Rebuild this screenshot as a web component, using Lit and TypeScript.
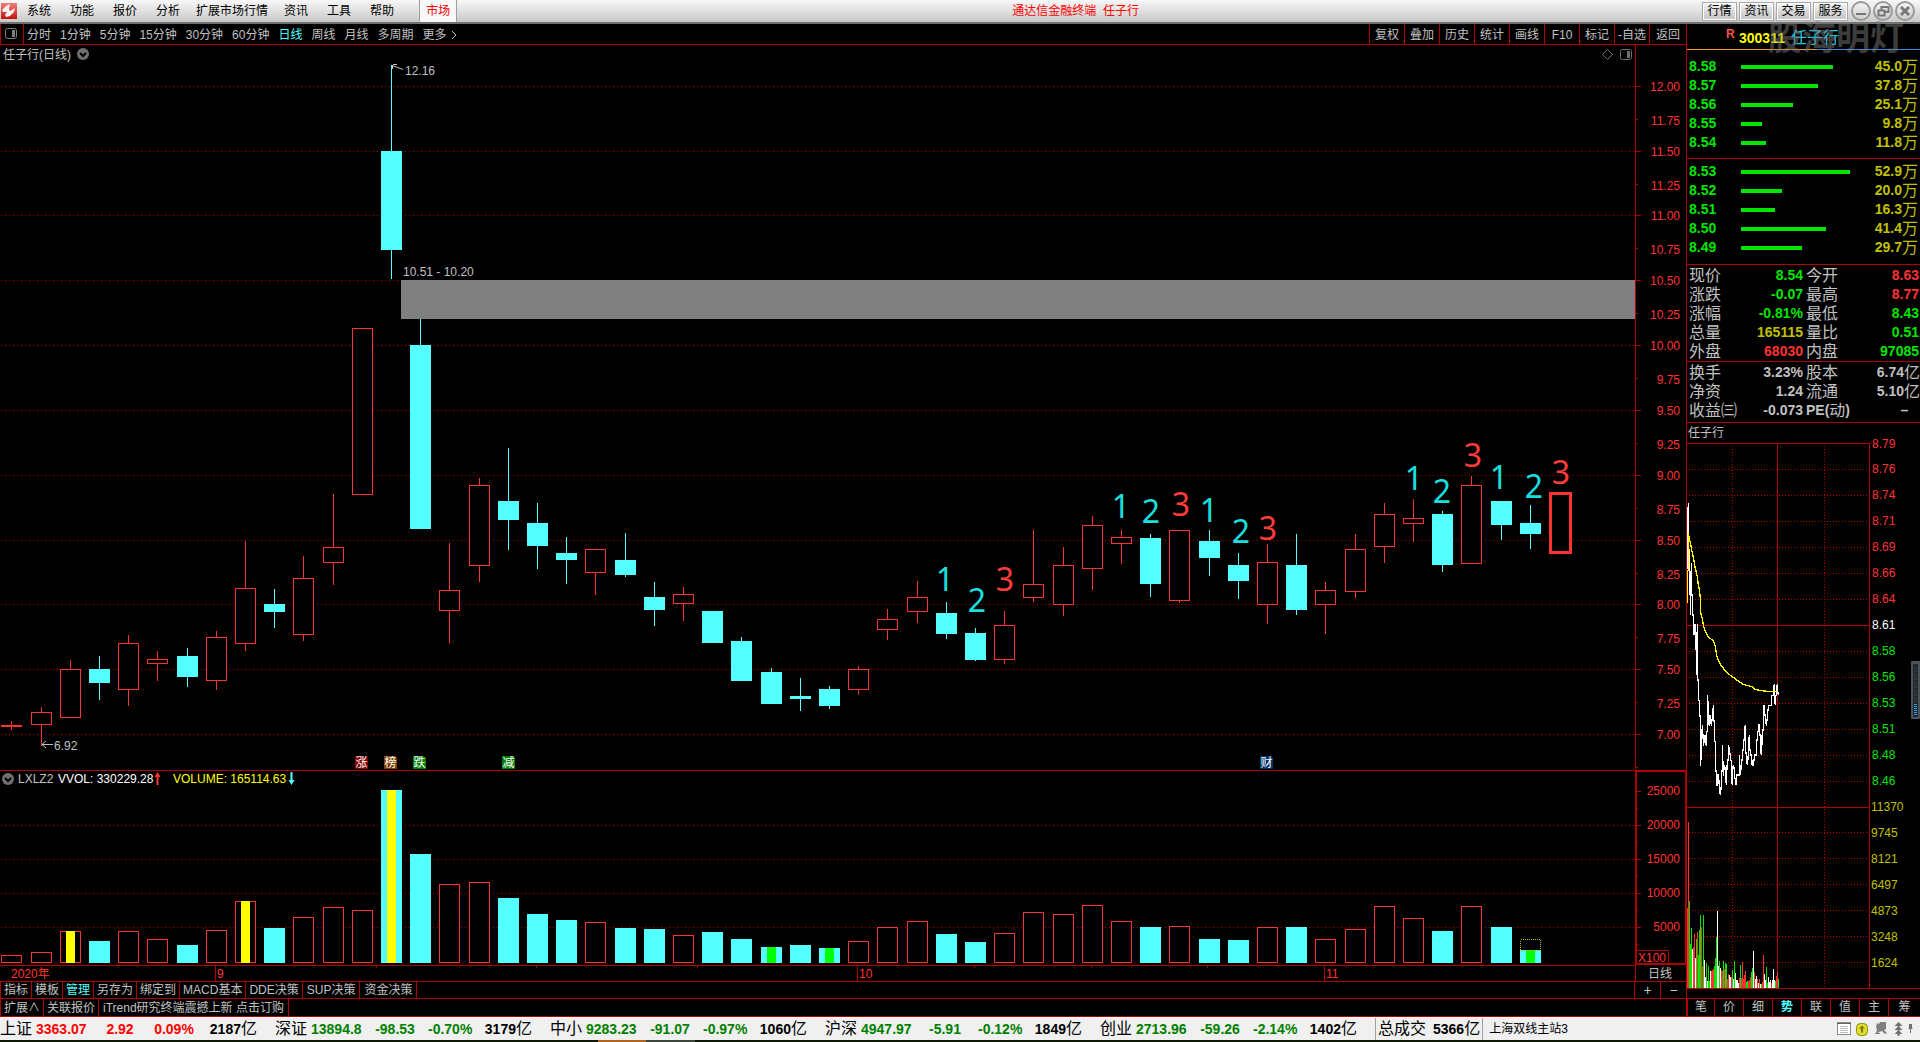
import { LitElement, html, svg, css } from "lit";
import { customElement, property, state } from "lit/decorators.js";
import { classMap } from "lit/directives/class-map.js";

type Kind = "u" | "d";
// kind, high, body top, body bottom, low, volume top, accent
type Candle = [Kind, number, number, number, number, number, string?];

const CANDLES: Candle[] = [
  ["u", 721, 725, 727, 730, 955],
  ["u", 707, 712, 725, 746, 952],
  ["u", 660, 669, 718, 718, 931, "y"],
  ["d", 656, 669, 683, 700, 941],
  ["u", 635, 643, 690, 706, 931],
  ["u", 651, 659, 664, 681, 939],
  ["d", 648, 656, 677, 687, 945],
  ["u", 631, 637, 681, 690, 930],
  ["u", 541, 588, 644, 651, 901, "y"],
  ["d", 589, 604, 612, 628, 928],
  ["u", 556, 578, 635, 641, 917],
  ["u", 494, 547, 563, 585, 907],
  ["u", 328, 328, 495, 495, 910],
  ["d", 65, 151, 250, 279, 790, "y"],
  ["d", 319, 345, 529, 529, 854],
  ["u", 543, 590, 611, 643, 884],
  ["u", 478, 485, 566, 582, 882],
  ["d", 448, 501, 520, 550, 898],
  ["d", 503, 523, 546, 569, 914],
  ["d", 537, 553, 560, 584, 920],
  ["u", 549, 549, 573, 595, 922],
  ["d", 533, 560, 575, 577, 928],
  ["d", 582, 597, 610, 626, 929],
  ["u", 587, 594, 604, 621, 935],
  ["d", 611, 611, 643, 643, 932],
  ["d", 637, 641, 681, 681, 939],
  ["d", 668, 672, 704, 704, 947, "g"],
  ["d", 678, 696, 699, 711, 945],
  ["d", 686, 689, 706, 709, 948, "g"],
  ["u", 666, 669, 690, 695, 941],
  ["u", 609, 619, 630, 640, 927],
  ["u", 581, 597, 612, 623, 921],
  ["d", 602, 613, 634, 639, 934],
  ["d", 628, 633, 660, 661, 942],
  ["u", 611, 625, 660, 664, 933],
  ["u", 530, 584, 598, 602, 912],
  ["u", 547, 565, 605, 616, 914],
  ["u", 516, 525, 569, 590, 905],
  ["u", 530, 537, 544, 564, 921],
  ["d", 534, 538, 584, 597, 927],
  ["u", 530, 530, 601, 603, 926],
  ["d", 530, 541, 558, 576, 939],
  ["d", 553, 565, 581, 599, 940],
  ["u", 544, 562, 605, 624, 927],
  ["d", 534, 565, 610, 615, 927],
  ["u", 582, 590, 605, 634, 939],
  ["u", 534, 549, 592, 598, 929],
  ["u", 503, 514, 547, 563, 906],
  ["u", 499, 518, 524, 542, 918],
  ["d", 511, 514, 565, 572, 931],
  ["u", 476, 485, 564, 564, 906],
  ["d", 501, 501, 525, 540, 927],
  ["d", 505, 523, 534, 549, 950, "g"],
];

const COUNTS: [string, number, number][] = [
  ["1", 945, 591], ["2", 977, 612], ["3", 1005, 591],
  ["1", 1121, 518], ["2", 1151, 523], ["3", 1181, 516],
  ["1", 1209, 522], ["2", 1241, 543], ["3", 1268, 540],
  ["1", 1414, 490], ["2", 1442, 503], ["3", 1473, 467],
  ["1", 1499, 489], ["2", 1534, 498], ["3", 1561, 484],
];

const PRICE_ROWS = [86, 151, 215, 280, 345, 410, 475, 540, 604, 669, 734];
const VOLUME_ROWS: [number, string][] = [
  [791, "25000"], [825, "20000"], [859, "15000"], [893, "10000"], [927, "5000"],
];
const MARKS: [string, number, string][] = [
  ["涨", 355, "#800000"], ["榜", 384, "#804000"], ["跌", 413, "#008000"],
  ["减", 502, "#008000"], ["财", 1260, "#003366"],
];

const PRICE_PATH =
  "202,388 202,265 205,190 205,330 208,330 208,465 211,448 211,525 214,370 214,465 217,465 217,525 220,525 220,585 223,552 223,585 226,552 226,628 229,628 229,704 232,552 232,720 235,720 235,782 238,782 238,828 241,828 241,978 244,945 247,855 247,885 250,885 250,918 253,900 253,886 256,886 256,903 259,918 259,885 262,870 262,766 265,796 265,840 268,858 268,826 271,826 274,858 274,840 277,840 280,796 280,843 283,843 283,905 286,905 286,993 289,993 289,1036 292,1036 292,1005 295,1005 298,1036 301,1066 304,1036 304,993 307,993 307,915 307,975 310,962 310,1008 313,975 316,990 319,1036 319,975 322,990 322,960 325,960 325,915 328,930 331,948 331,962 334,962 334,1005 337,1036 337,990 340,975 343,990 343,1005 349,1036 349,1005 358,1005 358,945 361,1005 361,975 364,990 364,960 367,960 367,930 370,930 370,900 373,900 373,870 376,855 376,930 379,945 379,960 382,975 385,945 385,930 388,885 388,930 391,930 391,945 394,945 394,975 397,960 397,975 400,975 400,960 403,960 403,945 409,945 409,900 412,900 412,885 415,870 415,855 418,855 418,885 421,885 421,915 424,945 424,885 427,915 427,870 430,870 430,796 433,796 433,825 436,825 439,858 439,840 442,840 442,810 445,810 445,796 454,796 454,766 460,766 460,750 463,732 463,766 466,796 466,766 469,766 469,750 472,732 472,750 475,765";
const AVERAGE_PATH =
  "202,488 202,400 205,388 205,277 208,300 211,305 214,325 220,352 226,385 232,410 235,435 238,450 241,475 241,515 247,535 250,555 256,575 265,590 280,603 286,620 291,650 300,672 310,685 320,698 337,710 350,720 370,733 395,740 405,748 420,751 440,754 475,754";
// Minute volume bars, one per step: colour letter and top
const MINUTE_BARS =
  "r384 r126 g363 g492 g444 w507 r500 r462 w534 g477 r456 g525 g450 g405 r441 r558 g405 w540 w591 g549 w603 g558 g603 w573 r573 r570 r567 g558 g534 g471 w393 w558 g543 w564 r570 r573 g543 r567 g549 g552 r597 r582 w585 w591 r591 g570 w597 g543 w579 w600 w600 w609 r594 g555 r594 r546 r597 r585 r573 g606 g603 r603 r600 r591 g576 g564 w513 r576 w597 w588 r597 w609 r597 w612 g612 r606 r525 w582 w600 g561 g609 w591 w606 w600 r609 w600 w567 w600 g603 r588 r576 g597".split(" ");

const centre = (i: number) => Math.round(11.4 + 29.2 * i);
const MINUTE_COLOURS: Record<string, string> = { r: "#ff3232", g: "#00e600", w: "#ffffff" };

const shared = css`
  * { box-sizing: border-box; }
  button {
    font: inherit; color: inherit; background: none; border: 0;
    margin: 0; padding: 0; white-space: nowrap; cursor: default;
  }
  svg { display: block; }
`;

@customElement("kline-chart")
class KlineChart extends LitElement {
  static styles = [shared, css`
    :host { display: block; }
    .chart { width: 100%; height: auto; font-family: "Liberation Sans", "Noto Sans CJK SC", sans-serif; font-size: 12px; }
    .crisp { shape-rendering: crispEdges; }
    .line { stroke: #b00000; fill: none; }
    .dots { stroke: #c00000; stroke-dasharray: 1 3; }
    .up { stroke: #ff3232; fill: #000; }
    .down { stroke: #54ffff; fill: #54ffff; }
    .thick { stroke: #ff3232; stroke-width: 3; fill: #000; }
    .axis { fill: #ff3232; text-anchor: end; }
    .red { fill: #ff3232; }
    .grey { fill: #c0c0c0; }
    .white { fill: #fff; }
    .yellow { fill: #ff0; }
    .count { font-family: "Noto Sans", sans-serif; font-size: 32px; text-anchor: middle; fill: #1adede; }
    .third { fill: #ff3c3c; }
    .mark { fill: #fff; text-anchor: middle; }
    .mid { text-anchor: middle; }
    .arrow { stroke: #c0c0c0; fill: none; }
    .dim { stroke: #707070; fill: none; }
    .disc { fill: #707070; }
    .tick { stroke: #000; stroke-width: 2; fill: none; }
  `];

  private toggle(x: number, y: number) {
    return svg`<circle class="disc" cx=${x} cy=${y} r="6"/><path class="tick" d="M${x - 3} ${y - 1}l3 3l3 -3"/>`;
  }

  private candle(c: Candle, i: number) {
    const [kind, high, top, bottom, low] = c;
    const x = centre(i);
    return svg`<g class=${kind === "u" ? "up" : "down"}>
      <path d="M${x + 0.5} ${high}V${low}"/>
      <rect x=${x - 9.5} y=${top + 0.5} width="20" height=${bottom - top - 1}/></g>`;
  }

  private volume(c: Candle, i: number) {
    const x = centre(i);
    const top = c[5];
    return svg`<g class=${c[0] === "u" ? "up" : "down"}>
      <rect x=${x - 9.5} y=${top + 0.5} width="20" height=${962 - top}/></g>
      ${c[6] ? svg`<rect x=${x - 4} y=${top} width="9" height=${963 - top} fill=${c[6] === "y" ? "#ff0" : "#0f0"}/>` : null}`;
  }

  render() {
    return html`<svg class="chart" viewBox="0 45 1686 936" role="img" aria-label="任子行 日线">
      <g class="crisp">
        ${PRICE_ROWS.map((y) => svg`<path class="dots" d="M1 ${y + 0.5}H1635"/><path class="line" d="M1635 ${y + 0.5}h6"/>`)}
        ${PRICE_ROWS.map((y) => svg`<path class="line" d="M1635 ${y + 33.5}h3"/>`)}
        ${VOLUME_ROWS.map(([y], i) => svg`${i ? svg`<path class="dots" d="M1 ${y + 0.5}H1635"/>` : null}
          <path class="line" d="M1635 ${y + 0.5}h6M1637 ${y + 17.5}h1"/>`)}
        <path class="line" d="M0 770.5H1686M1635.5 45V981M0 965.5H1635"/>
        <path class="line" stroke-width="2" d="M1636 771H1686V964H1636Z"/>
        <path class="line" d="M1637 950.5H1668.5V963"/>
        <path class="line" d="M215.5 965V981M857.5 965V981M1324.5 965V981M376.5 965v3M536.5 965v3M697.5 965v3M974.5 965v3M1091.5 965v3M1207.5 965v3"/>
        ${CANDLES.map((c, i) => this.candle(c, i))}
        <rect x="401" y="280" width="1234" height="39" fill="#808080"/>
        <rect class="thick" x="1550.5" y="493.5" width="20" height="59"/>
        ${CANDLES.map((c, i) => this.volume(c, i))}
        <rect x="1520.5" y="939.5" width="20" height="11" fill="none" stroke="#c0c000" stroke-dasharray="1 1"/>
      </g>

      <text class="grey" x="3" y="59">任子行(日线)</text>
      ${this.toggle(83, 54)}
      <path class="dim" d="M1607.5 49.5l5 5l-5 5l-5 -5z"/>
      <rect class="dim" x="1620.5" y="49.5" width="11" height="10" rx="2"/>
      <rect x="1627" y="51" width="3" height="7" fill="#707070"/>

      ${PRICE_ROWS.map((y, i) => svg`<text class="axis" x="1680" y=${y + 5}>${(12 - i * 0.5).toFixed(2)}</text>`)}
      ${PRICE_ROWS.slice(0, -1).map((y, i) => svg`<text class="axis" x="1680" y=${y + 39}>${(11.75 - i * 0.5).toFixed(2)}</text>`)}
      ${VOLUME_ROWS.map(([y, t]) => svg`<text class="axis" x="1680" y=${y + 4}>${t}</text>`)}
      <text class="red" x="1638" y="962">X100</text>
      <text class="grey mid" x="1660" y="978">日线</text>

      <path class="arrow" d="M403 69.5L392 65.5M397 64.5h-4M392.500 65v4"/>
      <text class="grey" x="405" y="75">12.16</text>
      <text class="grey" x="403" y="276">10.51 - 10.20</text>
      <path class="arrow" d="M53 744.5H42M46 741l-4 3.500l4 3.500"/>
      <text class="grey" x="54" y="750">6.92</text>

      ${COUNTS.map(([t, x, y]) => svg`<text class=${t === "3" ? "count third" : "count"} x=${x} y=${y}>${t}</text>`)}
      ${MARKS.map(([t, x, c]) => svg`<path d="M${x} 756h11l2 2v11h-13z" fill=${c}/><text class="mark" x=${x + 6.5} y="767">${t}</text>`)}

      ${this.toggle(8, 779)}
      <text class="grey" x="18" y="783">LXLZ2</text>
      <text class="white" x="58" y="783">VVOL: 330229.28</text>
      <path d="M157.500 772l-3 5h2v8h2v-8h2z" fill="#ff3232"/>
      <text class="yellow" x="173" y="783">VOLUME: 165114.63</text>
      <path d="M291.500 785l-3 -5h2v-8h2v8h2z" fill="#54ffff"/>

      <text class="red" x="11" y="978">2020年</text>
      <text class="red" x="217" y="978">9</text>
      <text class="red" x="859" y="978">10</text>
      <text class="red" x="1326" y="978">11</text>
    </svg>`;
  }
}

@customElement("minute-chart")
class MinuteChart extends LitElement {
  static styles = [shared, css`
    :host { display: block; }
    .chart { width: 100%; height: auto; overflow: visible; font-family: "Liberation Sans", sans-serif; font-size: 12px; }
    .crisp { shape-rendering: crispEdges; }
    .line { stroke: #b00000; fill: none; }
    .dots { stroke: #b00000; stroke-dasharray: 1 2; }
    .rise { fill: #ff3232; }
    .flat { fill: #fff; }
    .fall { fill: #00e600; }
    .vol { fill: #c0c000; }
    .price { stroke: #fff; stroke-width: 4; fill: none; }
    .average { stroke: #ff0; stroke-width: 4; fill: none; }
  `];

  render() {
    const prices = ["8.79", "8.76", "8.74", "8.71", "8.69", "8.66", "8.64", "8.61", "8.58", "8.56", "8.53", "8.51", "8.48", "8.46"];
    const volumes = ["11370", "9745", "8121", "6497", "4873", "3248", "1624"];
    return html`<svg class="chart" viewBox="1687 443 233 555" role="img" aria-label="任子行 分时">
      <g class="crisp">
        ${prices.map((_, i) => (i % 7 ? svg`<path class="dots" d="M1689 ${443.5 + 26 * i}H1869"/>` : null))}
        ${volumes.map((_, i) => (i ? svg`<path class="dots" d="M1689 ${806.5 + 26 * i}H1869"/>` : null))}
        <path class="dots" d="M1732.5 446V988M1824.5 446V988"/>
        <path class="line" d="M1687 443.5H1869.5V988M1687 625.5H1869M1687 807.5H1869M1777.5 443V988M1687 988.5H1920"/>
        <g transform="translate(1620 780) scale(0.33333)">
          ${MINUTE_BARS.map((b, i) => svg`<rect x=${201 + i * 3} y=${+b.slice(1)} width="3" height=${624 - +b.slice(1)} fill=${MINUTE_COLOURS[b[0]]}/>`)}
        </g>
        <g transform="translate(1620 440) scale(0.33333)">
          <polyline class="price" points=${PRICE_PATH}/>
          <polyline class="average" points=${AVERAGE_PATH}/>
        </g>
      </g>
      ${prices.map((p, i) => svg`<text class=${i < 7 ? "rise" : i === 7 ? "flat" : "fall"} x="1872" y=${(i ? 447 : 448) + 26 * i}>${p}</text>`)}
      ${volumes.map((p, i) => svg`<text class="vol" x="1871" y=${811 + 26 * i}>${p}</text>`)}
      <rect x="1911" y="661" width="9" height="58" rx="1" fill="#4a545e"/>
      <rect x="1913" y="664" width="5" height="53" fill="#20262c"/>
      <path d="M1915.500 667V703" stroke="#3c3c40" stroke-width="3" stroke-dasharray="1 1"/>
      <path d="M1915.500 704V716" stroke="#28a0dc" stroke-width="3" stroke-dasharray="1 1"/>
    </svg>`;
  }
}

@customElement("quote-panel")
class QuotePanel extends LitElement {
  @state() private tab = "势";

  static styles = [shared, css`
    :host { display: flex; flex-direction: column; color: #c0c0c0; }
    .head {
      height: 26px; display: flex; align-items: center; padding: 2px 0 0 39px;
      border-bottom: 1px solid; border-image: linear-gradient(90deg, #f0a030 55%, #3c8ce0 56%) 1;
      font-size: 16px; color: #20c8e0;
    }
    .head sup { font: bold 12px "Liberation Sans", sans-serif; color: #ff5050; align-self: flex-start; width: 13px; padding-top: 1px; }
    .head b { font: bold 14px "Liberation Sans", sans-serif; color: #ff0; width: 52px; }
    table { border-collapse: collapse; width: 100%; table-layout: fixed; font-size: 16px; line-height: 19px; }
    th, td { padding: 0; height: 19px; font-weight: 400; text-align: left; white-space: nowrap; }
    b { font: bold 14px/19px "Liberation Sans", sans-serif; vertical-align: top; }
    .asks { padding: 7px 2px 6px; }
    .bids { padding: 3px 2px 7px; border-top: 1px solid #b00000; }
    .level { width: 52px; color: #00e600; }
    .amount { width: 48px; color: #c0c000; text-align: right; }
    .bar { height: 4px; background: #00e600; }
    .quotes { padding: 1px 1px 0 2px; border-top: 1px solid #b00000; }
    .basics { padding: 1px 0 2px 2px; border-top: 1px solid #b00000; }
    .name { width: 48px; }
    .basics td, .quotes td { text-align: right; }
    .basics .first, .quotes .first { width: 66px; }
    .second { width: 51px; padding-left: 3px; }
    .g { color: #00e600; }
    .r { color: #ff3232; }
    .y { color: #c0c000; }
    .title { height: 21px; line-height: 20px; font-size: 12px; padding-left: 1px; border-top: 1px solid #b00000; }
    .tabs { display: grid; grid-template-columns: 27px repeat(6, 29px) 1fr; height: 19px; border: solid #b00000; border-width: 1px 0; font-size: 12px; }
    .tabs button { border-left: 1px solid #b00000; line-height: 17px; }
    .tabs .on { color: #54ffff; font-weight: 700; }
  `];

  private book(rows: [string, number, string][]) {
    return html`<table><tbody>${rows.map(([p, w, a]) => html`<tr>
      <th class="level" scope="row"><b>${p}</b></th>
      <td><div class="bar" style="width:${w}px"></div></td>
      <td class="amount"><b>${a}</b>万</td></tr>`)}</tbody></table>`;
  }

  render() {
    const quotes = [
      ["现价", "8.54", "g", "今开", "8.63", "r"],
      ["涨跌", "-0.07", "g", "最高", "8.77", "r"],
      ["涨幅", "-0.81%", "g", "最低", "8.43", "g"],
      ["总量", "165115", "y", "量比", "0.51", "g"],
      ["外盘", "68030", "r", "内盘", "97085", "g"],
    ];
    return html`
      <div class="head"><sup>R</sup><b>300311</b><span>任子行</span></div>
      <div class="asks">${this.book([["8.58", 92, "45.0"], ["8.57", 77, "37.8"], ["8.56", 52, "25.1"], ["8.55", 21, "9.8"], ["8.54", 25, "11.8"]])}</div>
      <div class="bids">${this.book([["8.53", 109, "52.9"], ["8.52", 41, "20.0"], ["8.51", 34, "16.3"], ["8.50", 85, "41.4"], ["8.49", 61, "29.7"]])}</div>
      <div class="quotes"><table><tbody>${quotes.map(([a, b, c, d, e, f]) => html`<tr>
        <th class="name" scope="row">${a}</th><td class="first ${c}"><b>${b}</b></td>
        <th class="second" scope="row">${d}</th><td class=${f}><b>${e}</b></td></tr>`)}</tbody></table></div>
      <div class="basics"><table><tbody>
        <tr><th class="name" scope="row">换手</th><td class="first"><b>3.23%</b></td><th class="second" scope="row">股本</th><td><b>6.74</b>亿</td></tr>
        <tr><th class="name" scope="row">净资</th><td class="first"><b>1.24</b></td><th class="second" scope="row">流通</th><td><b>5.10</b>亿</td></tr>
        <tr><th class="name" scope="row">收益㈢</th><td class="first"><b>-0.073</b></td><th class="second" scope="row"><b>PE(</b>动<b>)</b></th><td><b>–&nbsp;&nbsp;&nbsp;</b></td></tr>
      </tbody></table></div>
      <div class="title">任子行</div>
      <minute-chart></minute-chart>
      <div class="tabs">${["笔", "价", "细", "势", "联", "值", "主", "筹"].map((t) => html`
        <button class=${classMap({ on: t === this.tab })} @click=${() => (this.tab = t)}>${t}</button>`)}</div>`;
  }
}

@customElement("status-bar")
class StatusBar extends LitElement {
  static styles = [shared, css`
    :host { display: flex; height: 23px; align-items: center; background: #f0f0f0; border-top: 1px solid #fff; color: #000; font-size: 16px; line-height: 22px; white-space: nowrap; overflow: hidden; }
    b { font: bold 14px/22px "Liberation Sans", sans-serif; vertical-align: top; }
    .index { display: grid; grid-template-columns: 36px 51px 66px 42px 62px; padding-right: 18px; flex: none; }
    .mid { text-align: center; }
    .end { text-align: right; }
    .rise b { color: #f00; }
    .fall b { color: #008000; }
    .total { border: solid #a0a0a0; border-width: 0 1px; padding: 0 2px; display: flex; gap: 7px; height: 22px; }
    .site { font-size: 12px; padding-left: 6px; flex: 1; }
    .tray { display: flex; align-items: center; gap: 5px; padding-right: 7px; }
  `];

  render() {
    const rows = [
      ["上证", "3363.07", "2.92", "0.09%", "2187"],
      ["深证", "13894.8", "-98.53", "-0.70%", "3179"],
      ["中小", "9283.23", "-91.07", "-0.97%", "1060"],
      ["沪深", "4947.97", "-5.91", "-0.12%", "1849"],
      ["创业", "2713.96", "-59.26", "-2.14%", "1402"],
    ];
    return html`
      ${rows.map(([n, p, c, r, a]) => html`<div class="index">
        <span>${n}</span>
        <span class=${c[0] === "-" ? "fall" : "rise"}><b>${p}</b></span>
        <span class=${c[0] === "-" ? "mid fall" : "mid rise"}><b>${c}</b></span>
        <span class=${c[0] === "-" ? "mid fall" : "mid rise"}><b>${r}</b></span>
        <span class="end"><b>${a}</b>亿</span></div>`)}
      <div class="total"><span>总成交</span><span><b>5366</b>亿</span></div>
      <span class="site">上海双线主站3</span>
      <div class="tray">
        <svg width="14" height="14"><rect x=".5" y=".5" width="13" height="12" fill="#fff" stroke="#888"/><path d="M0 1.500h14" stroke="#666"/><path d="M3 4.500h8M3 6.500h8M3 8.500h8M3 10.500h8" stroke="#bbb"/></svg>
        <svg width="12" height="13"><rect x=".5" y=".5" width="11" height="12" rx="4" fill="#e0dc30" stroke="#908c10"/><path d="M6 2.500l-3 3h2v4h2v-4h2z" fill="#807800"/></svg>
        <svg width="16" height="14" viewBox="2 0 16 14"><path d="M6 1l2 1l1 -2h6v7l-2 1l3 3l-2 1l-3 -3l-3 1l-1 1h2v1h-5v-1h1l1 -3l-1 -3z" fill="#808080"/></svg>
        <svg width="9" height="14"><path d="M4.500 0l4 4h-3v1l3 3h-3v1l3 3h-3v2h-2v-2h-3l3 -3v-1h-3l3 -3v-1h-3z" fill="#707070"/></svg>
        <svg width="5" height="14"><path d="M1 2h3v4l1 1h-5l1 -1zM2 7h1v4h-1z" fill="#707070"/></svg>
      </div>`;
  }
}

@customElement("app-root")
class AppRoot extends LitElement {
  @property() period = "日线";

  static styles = [shared, css`
    :host { display: flex; flex-direction: column; position: relative; min-height: 100vh; background: #000; color: #c0c0c0; font-family: "Liberation Sans", "Noto Sans CJK SC", sans-serif; font-size: 12px; line-height: 16px; overflow: hidden; }
    .top { height: 24px; display: flex; align-items: center; background: linear-gradient(#f8f8f8, #c8c8c8); border-bottom: 2px solid #707070; color: #000; }
    .logo { flex: none; margin: 0 1px; }
    .menu { display: flex; align-self: stretch; gap: 1px; }
    .menu button { padding: 0 9px; }
    .menu .wide { padding: 0 6px; }
    .menu .market { margin-left: 15px; padding: 0 6px; color: #f00; background: #f8f8f8; border: solid #a0a0a0; border-width: 0 1px; }
    .caption { flex: 1; text-align: center; color: #f00; padding-right: 8px; font-size: 12px; font-weight: 400; margin: 0; }
    .quick { display: flex; gap: 2px; align-items: center; padding-right: 5px; }
    .quick .key { width: 35px; height: 19px; border: 1px solid #a8a8a8; box-shadow: inset 0 0 0 1px #fff; background: linear-gradient(#f8f8f8, #d8d8d8 50%, #c4c4c4); }
    .window { width: 20px; height: 20px; }
    .window.first { margin-left: 1px; }
    .body { display: flex; align-items: flex-start; flex: 1; }
    .left { flex: 1; min-width: 0; }
    .nav { height: 21px; display: flex; border-bottom: 1px solid #b00000; border-left: 1px solid #b00000; }
    .pane { width: 23px; border-right: 1px solid #b00000; display: flex; align-items: center; padding-left: 4px; }
    .periods { display: flex; gap: 9px; padding-left: 3px; flex: 1; }
    .periods button, .tools button { padding-top: 1px; }
    .more { display: flex; align-items: center; gap: 4px; }
    .on { color: #54ffff; }
    .tools { display: flex; }
    .tools button { width: 35px; border-left: 1px solid #b00000; }
    .tools button:last-child { width: 37px; }
    .bar { height: 17px; display: flex; border-top: 1px solid #b00000; }
    .bar.last { height: 19px; border-bottom: 1px solid #b00000; }
    .bar button { padding: 0 3px; border-right: 1px solid #b00000; }
    .bar .loose { padding: 0 4px; }
    .bar .edge { border-left: 1px solid #b00000; }
    .fill { flex: 1; }
    .bar .zoom { width: 26px; padding: 0; border: 0; border-left: 1px solid #b00000; font-size: 14px; line-height: 14px; }
    .side { width: 234px; flex: none; border-left: 1px solid #b00000; }
    .desk { height: 2px; background: linear-gradient(90deg, #101808 598px, #b06420 598px, #b06420 646px, #3c463c 646px, #3c463c 695px, #101808 695px); }
    .stamp { position: absolute; right: 16px; top: 14px; font-size: 34px; line-height: 48px; font-weight: 700; color: rgba(120, 120, 120, 0.5); pointer-events: none; }
  `];

  render() {
    const menus = ["系统", "功能", "报价", "分析", "扩展市场行情", "资讯", "工具", "帮助"];
    const periods = ["分时", "1分钟", "5分钟", "15分钟", "30分钟", "60分钟", "日线", "周线", "月线", "多周期"];
    return html`
      <header class="top">
        <svg class="logo" width="16" height="16"><defs><linearGradient id="lg" x2="0" y2="1"><stop offset="0" stop-color="#f08080"/><stop offset="1" stop-color="#c81010"/></linearGradient></defs>
          <rect width="16" height="16" fill="url(#lg)"/><path d="M1 7l4 -4l4 -2l-1 5l1 2l5 -3l-1 4l-4 4l-4 1l-1 -2l2 -3l-4 0z" fill="#f4f0f0"/></svg>
        <nav class="menu">
          ${menus.map((m) => html`<button class=${classMap({ wide: m.length > 2 })}>${m}</button>`)}
          <button class="market">市场</button>
        </nav>
        <h1 class="caption">通达信金融终端&nbsp; 任子行</h1>
        <div class="quick">
          ${["行情", "资讯", "交易", "服务"].map((m) => html`<button class="key">${m}</button>`)}
          <button class="window first" aria-label="最小化"><svg width="20" height="20" fill="none" stroke="#888"><circle cx="10" cy="10" r="9" stroke-width="2" stroke="#999"/><path d="M5 13h10" stroke="#777" stroke-width="2"/></svg></button>
          <button class="window" aria-label="还原"><svg width="20" height="20" fill="none" stroke="#777"><circle cx="10" cy="10" r="9" stroke-width="2" stroke="#999"/><path d="M8.500 9V6h7v5h-3M5.500 9.500h6v5h-6z" stroke-width="2"/></svg></button>
          <button class="window" aria-label="关闭"><svg width="20" height="20" fill="none" stroke="#777"><circle cx="10" cy="10" r="9" stroke-width="2" stroke="#999"/><path d="M6 6l8 8M14 6l-8 8" stroke-width="3"/></svg></button>
        </div>
      </header>
      <main class="body">
        <div class="left">
          <div class="nav">
            <div class="pane"><svg width="12" height="12"><rect x=".5" y=".5" width="11" height="10" rx="2" fill="none" stroke="#808080"/><rect x="7" y="2" width="3" height="7" fill="#808080"/></svg></div>
            <div class="periods">
              ${periods.map((p) => html`<button class=${classMap({ on: p === this.period })} @click=${() => (this.period = p)}>${p}</button>`)}
              <button class="more">更多<svg width="6" height="10" fill="none" stroke="#c0c0c0"><path d="M1 1l4 4l-4 4"/></svg></button>
            </div>
            <div class="tools">${["复权", "叠加", "历史", "统计", "画线", "F10", "标记", "-自选", "返回"].map((t) => html`<button>${t}</button>`)}</div>
          </div>
          <kline-chart></kline-chart>
          <div class="bar">
            <button class="edge">指标</button><button>模板</button><button class="on">管理</button>
            <button>另存为</button><button>绑定到</button><button>MACD基本</button><button>DDE决策</button><button class="loose">SUP决策</button><button class="loose">资金决策</button>
            <span class="fill"></span><button class="zoom">+</button><button class="zoom">−</button>
          </div>
          <div class="bar last">
            <button class="edge">扩展∧</button><button>关联报价</button><button class="loose">iTrend研究终端震撼上新 点击订购</button>
          </div>
        </div>
        <quote-panel class="side"></quote-panel>
      </main>
      <status-bar></status-bar>
      <div class="desk"></div>
      <div class="stamp">股海明灯</div>`;
  }
}
